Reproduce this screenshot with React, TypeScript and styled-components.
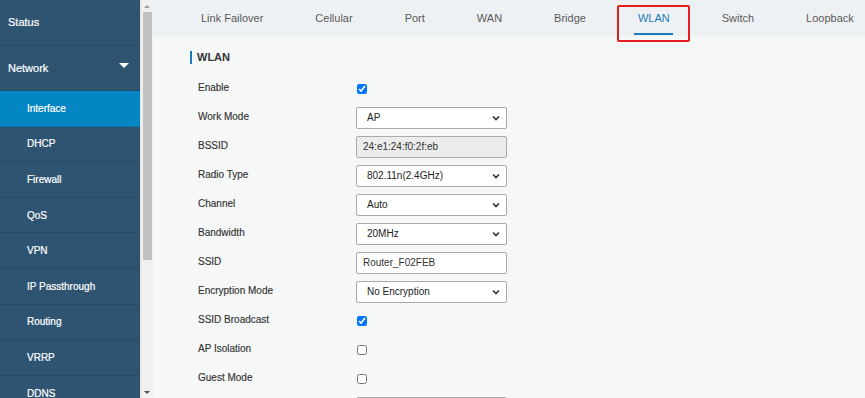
import styled, { createGlobalStyle } from "styled-components";

const SIDEBAR = `rgb(46, 84, 114)`;
const ACTIVE = `rgb(5, 134, 196)`;
const ACCENT = `rgb(26, 124, 184)`;

const CHEVRON = `url("data:image/svg+xml;utf8,<svg xmlns='http://www.w3.org/2000/svg' width='8' height='6' viewBox='0 0 8 6'><path d='M1 1.5 L4 4.5 L7 1.5' fill='none' stroke='%23333' stroke-width='1.6'/></svg>")`;

const GlobalStyle = createGlobalStyle`
    html, body {
        margin: 0;
        padding: 0;
        height: 398px;
        overflow: hidden;
        font-family: "Liberation Sans", Arial, sans-serif;
    }
`;

const StyledPage = styled.div`
    display: flex;
    width: 865px;
    height: 398px;
    background-color: rgb(246, 248, 248);
`;

const StyledSidebar = styled.nav`
    width: 140px;
    flex-shrink: 0;
    background-color: ${SIDEBAR};
    display: flex;
    flex-direction: column;
    overflow: hidden;
`;

const StyledMenuDiv = styled.div`
    display: flex;
    align-items: center;
    justify-content: space-between;
    height: 45.5px;
    padding: 0 8px;
    flex-shrink: 0;
    color: rgb(255, 255, 255);
    font-size: 11px;
    -webkit-text-stroke: 0.2px rgb(255, 255, 255);
    border-bottom: 1px solid rgba(0, 0, 0, 0.1);
    box-sizing: border-box;
`;

const StyledCaret = styled.span`
    width: 0;
    height: 0;
    margin-right: 3px;
    margin-top: -5px;
    border-left: 5px solid transparent;
    border-right: 5px solid transparent;
    border-top: 5px solid rgb(255, 255, 255);
`;

const StyledSubDiv = styled.div<{ $active?: boolean }>`
    display: flex;
    align-items: center;
    height: 35.6px;
    padding-left: 27px;
    flex-shrink: 0;
    box-sizing: border-box;
    color: rgb(255, 255, 255);
    font-size: 10px;
    -webkit-text-stroke: 0.2px rgb(255, 255, 255);
    background-color: ${({ $active }) => ($active ? ACTIVE : SIDEBAR)};
    border-bottom: 1px solid rgba(0, 0, 0, 0.1);
`;

const StyledScrollDiv = styled.div`
    width: 13px;
    flex-shrink: 0;
    display: flex;
    flex-direction: column;
    align-items: center;
    background-color: rgb(240, 240, 240);
    border-left: 1px solid rgb(226, 226, 226);
    box-sizing: border-box;
`;

const StyledScrollArrow = styled.div<{ $down?: boolean }>`
    height: 12px;
    display: flex;
    align-items: center;
    justify-content: center;
    &::after {
        content: "";
        border-left: 3px solid transparent;
        border-right: 3px solid transparent;
        ${({ $down }) =>
            $down
                ? `border-top: 3px solid rgb(80, 80, 80);`
                : `border-bottom: 3px solid rgb(160, 160, 160);`}
    }
`;

const StyledThumb = styled.div`
    width: 9px;
    height: 248px;
    background-color: rgb(193, 193, 193);
`;

const StyledTrack = styled.div`
    flex: 1;
`;

const StyledMain = styled.main`
    flex: 1;
    display: flex;
    flex-direction: column;
    min-width: 0;
`;

const StyledTabBar = styled.div`
    display: flex;
    height: 36px;
    padding-left: 22px;
    background-color: rgb(238, 241, 243);
    flex-shrink: 0;
`;

const StyledTab = styled.div<{ $active?: boolean }>`
    position: relative;
    display: flex;
    align-items: center;
    padding: 0 26px;
    font-size: 11px;
    color: ${({ $active }) => ($active ? ACCENT : "rgb(90, 90, 90)")};
    white-space: nowrap;
    &::after {
        content: "";
        display: ${({ $active }) => ($active ? "block" : "none")};
        position: absolute;
        left: 22px;
        right: 23px;
        bottom: 1px;
        height: 2px;
        background-color: ${ACCENT};
    }
`;

const StyledHighlight = styled.span`
    position: absolute;
    top: 5px;
    bottom: -6px;
    left: 5px;
    right: 6px;
    border: 2px solid rgb(228, 30, 30);
    border-radius: 2px;
    pointer-events: none;
`;

const StyledContent = styled.section`
    padding: 15px 0 0 37px;
`;

const StyledTitle = styled.h3`
    margin: 0 0 10px;
    height: 13px;
    line-height: 13px;
    padding-left: 5px;
    border-left: 2px solid ${ACCENT};
    font-size: 11px;
    font-weight: bold;
    color: rgb(51, 51, 51);
`;

const StyledRow = styled.div`
    display: grid;
    grid-template-columns: 158px 151px;
    align-items: center;
    height: 29px;
    padding-left: 8px;
`;

const StyledLabel = styled.label`
    font-size: 10px;
    color: rgb(51, 51, 51);
    -webkit-text-stroke: 0.15px rgb(51, 51, 51);
    margin-top: -2px;
`;

const StyledCheck = styled.input`
    width: 10px;
    height: 10px;
    margin: 0 0 0 1px;
    accent-color: rgb(0, 117, 255);
`;

const StyledSelect = styled.select`
    appearance: none;
    height: 22px;
    width: 151px;
    padding: 0 16px 0 10px;
    font-family: "Liberation Sans", Arial, sans-serif;
    font-size: 10px;
    color: rgb(34, 34, 34);
    background: rgb(255, 255, 255) ${CHEVRON} no-repeat right 6px center;
    border: 1px solid rgb(170, 170, 170);
    border-radius: 2px;
`;

const StyledInput = styled.input<{ $disabled?: boolean }>`
    height: 22px;
    width: 151px;
    box-sizing: border-box;
    padding: 0 6px;
    font-family: "Liberation Sans", Arial, sans-serif;
    font-size: 10px;
    color: rgb(51, 51, 51);
    background-color: ${({ $disabled }) =>
        $disabled ? "rgb(236, 236, 236)" : "rgb(255, 255, 255)"};
    border: 1px solid rgb(170, 170, 170);
    border-radius: 2px;
`;

const subMenus = [
    "Interface",
    "DHCP",
    "Firewall",
    "QoS",
    "VPN",
    "IP Passthrough",
    "Routing",
    "VRRP",
    "DDNS",
];

const tabs = [
    "Link Failover",
    "Cellular",
    "Port",
    "WAN",
    "Bridge",
    "WLAN",
    "Switch",
    "Loopback",
];

type Field =
    | { label: string; kind: "check"; checked: boolean }
    | { label: string; kind: "select"; value: string }
    | { label: string; kind: "text"; value: string; disabled?: boolean };

// 마지막 행은 화면 아래로 잘려 입력칸 윗부분만 보임
const fields: Field[] = [
    { label: "Enable", kind: "check", checked: true },
    { label: "Work Mode", kind: "select", value: "AP" },
    { label: "BSSID", kind: "text", value: "24:e1:24:f0:2f:eb", disabled: true },
    { label: "Radio Type", kind: "select", value: "802.11n(2.4GHz)" },
    { label: "Channel", kind: "select", value: "Auto" },
    { label: "Bandwidth", kind: "select", value: "20MHz" },
    { label: "SSID", kind: "text", value: "Router_F02FEB" },
    { label: "Encryption Mode", kind: "select", value: "No Encryption" },
    { label: "SSID Broadcast", kind: "check", checked: true },
    { label: "AP Isolation", kind: "check", checked: false },
    { label: "Guest Mode", kind: "check", checked: false },
    { label: "", kind: "text", value: "" },
];

function renderControl(field: Field) {
    if (field.kind === "check")
        return <StyledCheck type="checkbox" defaultChecked={field.checked} />;
    if (field.kind === "select")
        return (
            <StyledSelect defaultValue={field.value}>
                <option>{field.value}</option>
            </StyledSelect>
        );
    return (
        <StyledInput
            type="text"
            defaultValue={field.value}
            disabled={field.disabled}
            $disabled={field.disabled}
        />
    );
}

function App() {
    return (
        <>
            <GlobalStyle />
            <StyledPage>
                <StyledSidebar>
                    <StyledMenuDiv>Status</StyledMenuDiv>
                    <StyledMenuDiv>
                        Network
                        <StyledCaret />
                    </StyledMenuDiv>
                    {subMenus.map((name, idx) => (
                        <StyledSubDiv key={name} $active={idx === 0}>
                            {name}
                        </StyledSubDiv>
                    ))}
                </StyledSidebar>
                <StyledScrollDiv>
                    <StyledScrollArrow />
                    <StyledThumb />
                    <StyledTrack />
                    <StyledScrollArrow $down />
                </StyledScrollDiv>
                <StyledMain>
                    <StyledTabBar>
                        {tabs.map((tab) => (
                            <StyledTab key={tab} $active={tab === "WLAN"}>
                                {tab}
                                {tab === "WLAN" && <StyledHighlight />}
                            </StyledTab>
                        ))}
                    </StyledTabBar>
                    <StyledContent>
                        <StyledTitle>WLAN</StyledTitle>
                        {fields.map((field, idx) => (
                            <StyledRow key={idx}>
                                <StyledLabel>{field.label}</StyledLabel>
                                {renderControl(field)}
                            </StyledRow>
                        ))}
                    </StyledContent>
                </StyledMain>
            </StyledPage>
        </>
    );
}

export default App;
